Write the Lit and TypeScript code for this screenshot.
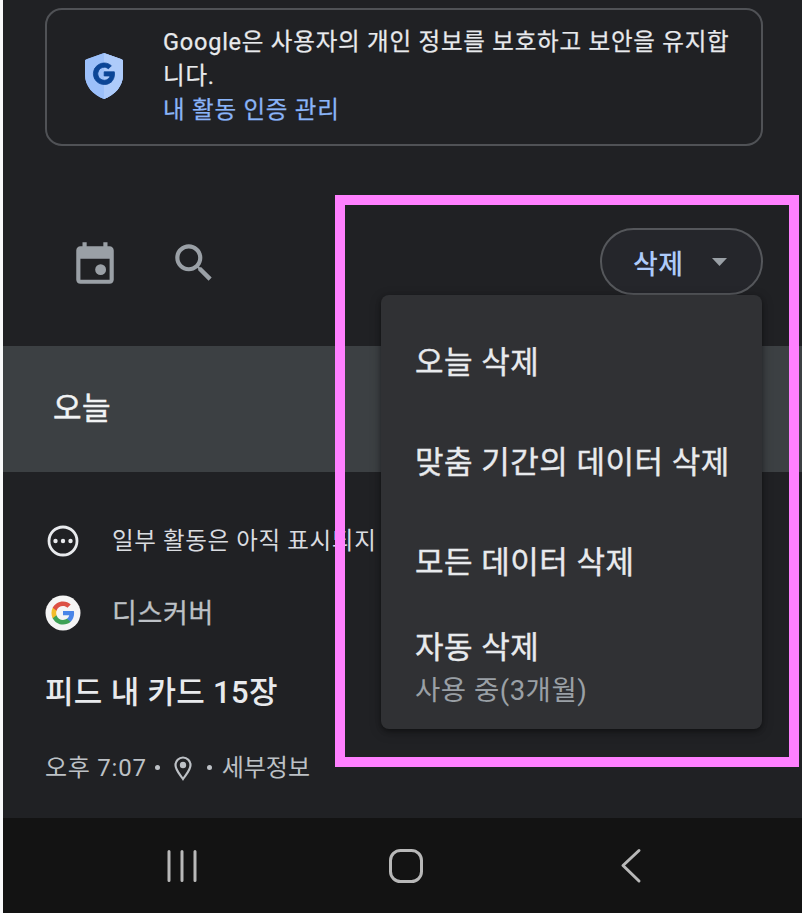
import { LitElement, html, css, svg } from "lit";
import { customElement } from "lit/decorators.js";

const G_BLUE = "M22.56 12.25c0-.78-.07-1.53-.2-2.25H12v4.26h5.92c-.26 1.37-1.04 2.53-2.21 3.31v2.77h3.57c2.08-1.92 3.28-4.74 3.28-8.09z";
const G_GREEN = "M12 23c2.97 0 5.46-.98 7.28-2.66l-3.57-2.77c-.98.66-2.23 1.06-3.71 1.06-2.86 0-5.29-1.93-6.16-4.53H2.18v2.84C3.99 20.53 7.7 23 12 23z";
const G_YELLOW = "M5.84 14.09c-.22-.66-.35-1.36-.35-2.09s.13-1.43.35-2.09V7.07H2.18C1.43 8.55 1 10.22 1 12s.43 3.45 1.18 4.93l3.66-2.84z";
const G_RED = "M12 5.38c1.62 0 3.06.56 4.21 1.64l3.15-3.15C17.45 2.09 14.97 1 12 1 7.7 1 3.99 3.47 2.18 7.07l3.66 2.84c.87-2.6 3.3-4.53 6.16-4.53z";

const googleMark = (fills: string[]) => svg`
  <path d=${G_BLUE} fill=${fills[0]}></path>
  <path d=${G_GREEN} fill=${fills[1]}></path>
  <path d=${G_YELLOW} fill=${fills[2]}></path>
  <path d=${G_RED} fill=${fills[3]}></path>`;

@customElement("delete-menu")
class DeleteMenu extends LitElement {
  static styles = css`
    :host {
      display: flex;
      flex-direction: column;
      box-sizing: border-box;
      width: 381px;
      height: 434px;
      padding-top: 18px;
      border-radius: 8px;
      background: #303134;
      box-shadow: 0 2px 5px rgba(0, 0, 0, 0.35), 0 3px 12px rgba(0, 0, 0, 0.25);
    }
    .item {
      display: flex;
      flex-direction: column;
      justify-content: center;
      box-sizing: border-box;
      height: 100px;
      padding-left: 34px;
      color: #e8eaed;
      font-size: 31px;
      line-height: 44px;
      letter-spacing: 0.5px;
      white-space: nowrap;
      -webkit-text-stroke: 0.4px currentColor;
    }
    .item.detailed {
      height: 112px;
    }
    .note {
      color: #9aa0a6;
      font-size: 27.5px;
      letter-spacing: 0.5px;
      line-height: 42px;
      -webkit-text-stroke: 0;
    }
  `;
  items = [
    { label: "오늘 삭제" },
    { label: "맞춤 기간의 데이터 삭제" },
    { label: "모든 데이터 삭제" },
    { label: "자동 삭제", note: "사용 중(3개월)" },
  ];
  render() {
    return this.items.map(
      (i: { label: string; note?: string }) => html`<div class="item ${i.note ? "detailed" : ""}">
        <span>${i.label}</span>${i.note ? html`<span class="note">${i.note}</span>` : ""}
      </div>`
    );
  }
}

@customElement("app-root")
class AppRoot extends LitElement {
  static styles = css`
    :host {
      display: flex;
      flex-direction: column;
      position: relative;
      box-sizing: border-box;
      width: 802px;
      height: 913px;
      overflow: hidden;
      border-left: 3px solid #f8f9fa;
      background: #202124;
      color: #e8eaed;
      font-family: Roboto, "Noto Sans CJK KR", sans-serif;
    }
    svg {
      display: block;
      flex: none;
    }
    .card {
      display: flex;
      align-items: center;
      box-sizing: border-box;
      width: 718px;
      height: 138px;
      margin: 8px 0 0 42px;
      padding: 0 0 2px 37px;
      gap: 39px;
      border: 2px solid #505256;
      border-radius: 17px;
      font-size: 23.5px;
      line-height: 34px;
      letter-spacing: 0.78px;
      white-space: nowrap;
      -webkit-text-stroke: 0.25px currentColor;
    }
    .link {
      color: #8ab4f8;
    }
    .toolbar {
      display: flex;
      align-items: flex-start;
      height: 200px;
      padding: 0 39px 0 67px;
    }
    .tool {
      margin-top: 92px;
    }
    .search {
      margin-left: 49px;
    }
    .pill {
      display: flex;
      align-items: center;
      justify-content: space-between;
      box-sizing: border-box;
      width: 163px;
      height: 67px;
      margin: 82px 0 0 auto;
      padding: 2px 34px 0 31px;
      border: 2px solid #55575b;
      border-radius: 34px;
      background: #25262b;
      color: #aecbfa;
      font-size: 27px;
      font-weight: 500;
      letter-spacing: 0.3px;
    }
    .day {
      display: flex;
      align-items: center;
      box-sizing: border-box;
      height: 126px;
      padding: 0 0 8px 50px;
      background: #3c4043;
      color: #f1f3f4;
      font-size: 31px;
      letter-spacing: 0.5px;
      -webkit-text-stroke: 0.5px currentColor;
    }
    .row {
      display: flex;
      align-items: center;
      height: 72px;
      padding-left: 42px;
      gap: 31px;
      white-space: nowrap;
    }
    .row span {
      padding-bottom: 4px;
    }
    .notice {
      margin-top: 33px;
      color: #dadce0;
      font-size: 23.5px;
      letter-spacing: 0.65px;
    }
    .source {
      color: #bdc1c6;
      font-size: 27px;
      letter-spacing: 0.7px;
      -webkit-text-stroke: 0.3px currentColor;
    }
    .headline {
      margin-left: 42px;
      height: 86px;
      line-height: 88px;
      font-size: 31px;
      font-weight: 500;
      letter-spacing: 0.3px;
    }
    .meta {
      display: flex;
      align-items: center;
      height: 64px;
      padding-left: 42px;
      color: #bdc1c6;
      font-size: 24px;
    }
    .meta span {
      padding-bottom: 4px;
    }
    .time {
      letter-spacing: 0.75px;
    }
    .dot {
      width: 5px;
      height: 5px;
      border-radius: 50%;
      background: #bdc1c6;
    }
    .time-dot {
      margin: 0 14px 0 8px;
    }
    .place-dot {
      margin: 0 10px 0 15px;
    }
    .pin {
      margin-top: 4px;
    }
    .nav {
      display: flex;
      align-items: center;
      height: 95px;
      margin-top: auto;
      background: #131313;
    }
    .home {
      margin-left: 190px;
    }
    .recent {
      margin-left: 161px;
    }
    .back {
      margin-left: 195px;
    }
    .menu {
      position: absolute;
      left: 378px;
      top: 295px;
    }
    .highlight {
      position: absolute;
      box-sizing: border-box;
      left: 332px;
      top: 195px;
      width: 464px;
      height: 572px;
      border: 10px solid #ff80ff;
    }
  `;
  render() {
    return html`
      <section class="card">
        <svg width="40" height="48" viewBox="0 0 40 48">
          <path d="M20 1 39 8v15c0 11-8 20-19 24C9 43 1 34 1 23V8z" fill="#8ab4f8"></path>
          <path d="M18 1.700Q20 .6 22 1.700L37 7q2 .7 2 3v13c0 11-8 20-19 24C9 43 1 34 1 23V10q0-2.300 2-3z" fill="#9cc0fa"></path>
          <path d="M20 1.200q1 0 2 .5L37 7q2 .7 2 3v13c0 11-8 20-19 24z" fill="#aecbfa"></path>
          <g transform="translate(8.400 10) scale(.98)" stroke="#0b4596" stroke-width=".8">
            ${googleMark(["#0b4596", "#0b4596", "#0b4596", "#0b4596"])}
          </g>
        </svg>
        <div>
          <div>Google은 사용자의 개인 정보를 보호하고 보안을 유지합<br />니다.</div>
          <div class="link">내 활동 인증 관리</div>
        </div>
      </section>

      <div class="toolbar">
        <svg class="tool" width="50" height="50" viewBox="0 0 24 24" fill="#9aa0a6">
          <path d="M19 4h-1V2h-2v2H8V2H6v2H5c-1.110 0-1.990.9-1.990 2L3 20c0 1.100.89 2 2 2h14c1.100 0 2-.9 2-2V6c0-1.100-.9-2-2-2zm0 16H5V10h14v10z"></path>
          <circle cx="14.700" cy="15.200" r="2.600"></circle>
        </svg>
        <svg class="tool search" width="50" height="50" viewBox="0 0 24 24" fill="#9aa0a6">
          <path d="M15.500 14h-.79l-.28-.27C15.410 12.590 16 11.110 16 9.500 16 5.910 13.090 3 9.500 3S3 5.910 3 9.500 5.910 16 9.500 16c1.610 0 3.090-.59 4.230-1.570l.27.28v.79l5 4.990L20.490 19l-4.990-5zm-6 0C7.010 14 5 11.990 5 9.500S7.010 5 9.500 5 14 7.010 14 9.500 11.990 14 9.500 14z"></path>
        </svg>
        <div class="pill">
          <span>삭제</span>
          <svg width="15" height="9" viewBox="0 0 15 9"><path d="M0 0h15L7.500 8z" fill="#9aa0a6"></path></svg>
        </div>
      </div>

      <div class="day">오늘</div>

      <div class="row notice">
        <svg width="36" height="36" viewBox="0 0 36 36" fill="#e8eaed">
          <circle cx="18" cy="18" r="14" fill="none" stroke="#e8eaed" stroke-width="2.800"></circle>
          <circle cx="10.500" cy="18" r="2.200"></circle>
          <circle cx="18" cy="18" r="2.200"></circle>
          <circle cx="25.500" cy="18" r="2.200"></circle>
        </svg>
        <span>일부 활동은 아직 표시되지</span>
      </div>
      <div class="row source">
        <svg width="36" height="36" viewBox="0 0 36 36">
          <circle cx="18" cy="18" r="17.500" fill="#f5f5f5"></circle>
          <g transform="translate(5.400 5.400) scale(1.050)">
            ${googleMark(["#4a86e8", "#3ea256", "#f4bd2a", "#dc5044"])}
          </g>
        </svg>
        <span>디스커버</span>
      </div>
      <div class="headline">피드 내 카드 15장</div>
      <div class="meta">
        <span class="time">오후 7:07</span>
        <i class="dot time-dot"></i>
        <svg class="pin" width="18" height="26" viewBox="0 0 18 26">
          <path d="M9 1.500a7.500 7.500 0 0 0-7.500 7.500c0 5 4.500 9.500 7.500 14 3-4.500 7.500-9 7.500-14A7.500 7.500 0 0 0 9 1.500z" fill="none" stroke="#bdc1c6" stroke-width="2.200"></path>
          <circle cx="9" cy="9" r="3.200" fill="#bdc1c6"></circle>
        </svg>
        <i class="dot place-dot"></i>
        <span>세부정보</span>
      </div>

      <div class="nav">
        <svg class="recent" width="34" height="34" viewBox="0 0 34 34" stroke="#b8b8b8" stroke-width="3" stroke-linecap="round">
          <path d="M5 2.500v29M18 2.500v29M31 2.500v29"></path>
        </svg>
        <svg class="home" width="36" height="36" viewBox="0 0 36 36">
          <rect x="2.500" y="2.500" width="31" height="31" rx="10" fill="none" stroke="#b8b8b8" stroke-width="3"></rect>
        </svg>
        <svg class="back" width="24" height="36" viewBox="0 0 24 36">
          <path d="M20 2.500 4 17.500l16 15.500" fill="none" stroke="#b8b8b8" stroke-width="3" stroke-linecap="round" stroke-linejoin="round"></path>
        </svg>
      </div>

      <delete-menu class="menu"></delete-menu>
      <div class="highlight"></div>
    `;
  }
}
